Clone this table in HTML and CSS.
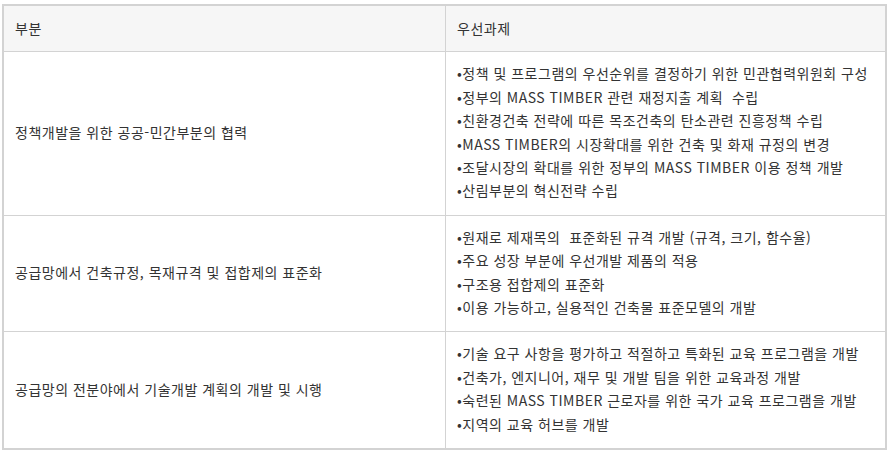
FILE: index.html
```html
<!DOCTYPE html>
<html lang="ko">
<head>
<meta charset="utf-8">
<link rel="stylesheet" href="styles.css">
</head>
<body>
<table class="tbl">
  <thead>
    <tr>
      <th class="col-a">부분</th>
      <th class="col-b">우선과제</th>
    </tr>
  </thead>
  <tbody>
    <tr class="row-1">
      <td class="sector">정책개발을 위한 공공-민간부분의 협력</td>
      <td class="tasks">
        <p>•정책 및 프로그램의 우선순위를 결정하기 위한 민관협력위원회 구성</p>
        <p>•정부의 MASS TIMBER 관련 재정지출 계획&nbsp; 수립</p>
        <p>•친환경건축 전략에 따른 목조건축의 탄소관련 진흥정책 수립</p>
        <p>•MASS TIMBER의 시장확대를 위한 건축 및 화재 규정의 변경</p>
        <p>•조달시장의 확대를 위한 정부의 MASS TIMBER 이용 정책 개발</p>
        <p>•산림부분의 혁신전략 수립</p>
      </td>
    </tr>
    <tr class="row-2">
      <td class="sector">공급망에서 건축규정, 목재규격 및 접합제의 표준화</td>
      <td class="tasks">
        <p>•원재로 제재목의&nbsp; 표준화된 규격 개발 (규격, 크기, 함수율)</p>
        <p>•주요 성장 부분에 우선개발 제품의 적용</p>
        <p>•구조용 접합제의 표준화</p>
        <p>•이용 가능하고, 실용적인 건축물 표준모델의 개발</p>
      </td>
    </tr>
    <tr class="row-3">
      <td class="sector">공급망의 전분야에서 기술개발 계획의 개발 및 시행</td>
      <td class="tasks">
        <p>•기술 요구 사항을 평가하고 적절하고 특화된 교육 프로그램을 개발</p>
        <p>•건축가, 엔지니어, 재무 및 개발 팀을 위한 교육과정 개발</p>
        <p>•숙련된 MASS TIMBER 근로자를 위한 국가 교육 프로그램을 개발</p>
        <p>•지역의 교육 허브를 개발</p>
      </td>
    </tr>
  </tbody>
</table>
</body>
</html>
```
FILE: styles.css
```css
html, body {
  margin: 0;
  padding: 0;
  background: #ffffff;
}
body {
  padding: 4px 0 0 2px;
  font-family: "Noto Sans CJK KR", "Noto Sans", sans-serif;
  font-size: 14px;
  letter-spacing: 0.5px;
  color: #333333;
}
.tbl {
  width: 885px;
  border-collapse: collapse;
  border: 2px solid #d3d3d3;
  table-layout: fixed;
}
.tbl th,
.tbl td {
  border: 1px solid #d3d3d3;
  text-align: left;
  font-weight: normal;
  line-height: 23.4px;
  vertical-align: middle;
}
.tbl th {
  background: #f6f6f6;
  padding: 11px 10px 11px 11px;
}
.col-a { width: 420px; }
.tbl td {
  padding: 10px 10px 12px 11px;
}
.tasks p {
  margin: 0;
  white-space: nowrap;
}
```
